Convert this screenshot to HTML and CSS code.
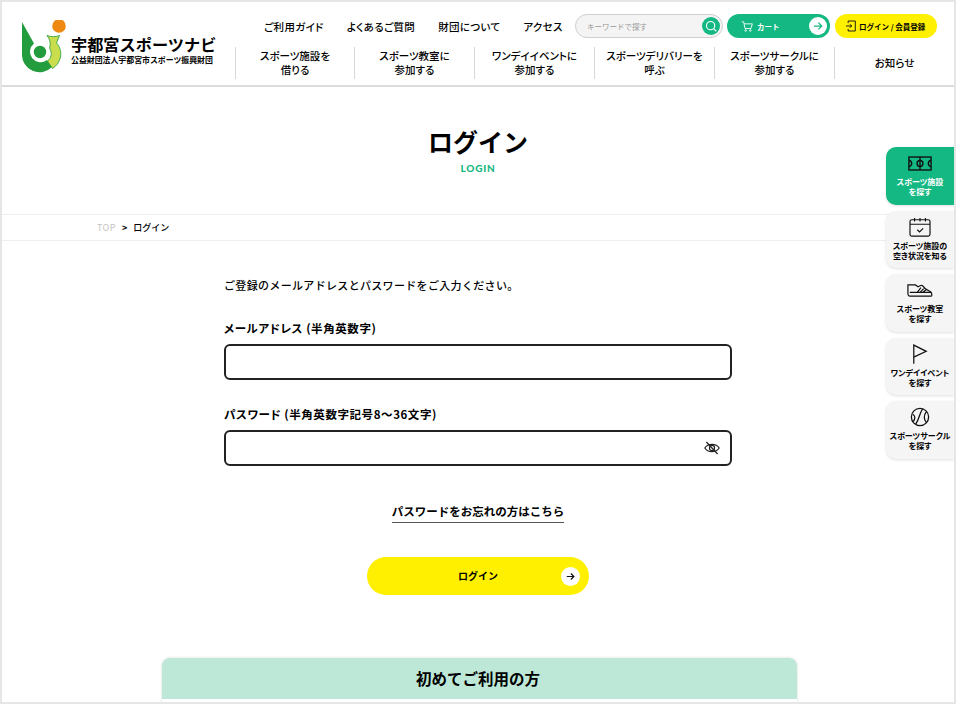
FILE: index.html
```html
<!DOCTYPE html>
<html lang="ja">
<head>
  <meta charset="UTF-8">
  <meta name="viewport" content="width=device-width, initial-scale=1.0">
  <title>ログイン - 宇都宮スポーツナビ</title>
  <link rel="stylesheet" href="styles.css">
</head>
<body>
<div class="frame">
  <header class="site-header">
    <a class="logo" href="#">
      <svg class="logo-mark" viewBox="22 20 44 54" width="44" height="54">
        <circle cx="59" cy="26" r="6.8" fill="#ee8a12"/>
        <circle cx="40" cy="52" r="6.2" fill="#229c3c"/>
        <path d="M22 22 L34 43.5 A10.5 10.5 0 0 0 47 60 L52 67 A17.5 17.5 0 0 1 22 54 Z" fill="#229c3c"/>
        <path d="M47 35.500 C51 37 56 37 59.500 35.500 L56.500 43 C60 47 61.500 52 60.500 57 C59.500 62 56.500 66 52.500 68.500 L47.500 61 C51.500 58 52.500 53 49.500 48 C51 44 50 39.500 47 35.500 Z" fill="#cadd4c" stroke="#229c3c" stroke-width=".8"/>
      </svg>
      <div class="logo-text">
        <span class="logo-name">宇都宮スポーツナビ</span>
        <span class="logo-org">公益財団法人宇都宮市スポーツ振興財団</span>
      </div>
    </a>
    <div class="header-right">
      <div class="top-row">
        <nav class="top-nav">
          <a href="#">ご利用ガイド</a>
          <a href="#">よくあるご質問</a>
          <a href="#">財団について</a>
          <a href="#">アクセス</a>
        </nav>
        <div class="search">
          <span class="search-text">キーワードで探す</span>
          <span class="search-btn">
            <svg viewBox="0 0 16 16" width="12" height="12" fill="none" stroke="#fff" stroke-width="1.500"><circle cx="7.500" cy="7.500" r="5.500"/><path d="M11.500 11.500 L15 15"/></svg>
          </span>
        </div>
        <a class="cart-btn" href="#">
          <svg viewBox="0 0 18 16" width="12" height="11" fill="none" stroke="#fff" stroke-width="1.300"><path d="M1 1 H4 L6 11 H15 L17 4 H4.500"/><circle cx="7" cy="14" r="1.200"/><circle cx="14" cy="14" r="1.200"/></svg>
          <span class="cart-label">カート</span>
          <span class="cart-arrow">
            <svg viewBox="0 0 12 12" width="10" height="10" fill="none" stroke="#14b883" stroke-width="1.500"><path d="M1 6 H10.500 M6.500 2 L10.500 6 L6.500 10"/></svg>
          </span>
        </a>
        <a class="login-btn" href="#">
          <svg viewBox="0 0 14 16" width="10" height="12" fill="none" stroke="#111" stroke-width="1.300"><path d="M3 4 V1 H13 V15 H3 V12"/><path d="M0 8 H8 M5.500 5.500 L8 8 L5.500 10.500"/></svg>
          <span>ログイン / 会員登録</span>
        </a>
      </div>
      <nav class="main-nav">
        <a href="#">スポーツ施設を<br>借りる</a>
        <a href="#">スポーツ教室に<br>参加する</a>
        <a href="#">ワンデイイベントに<br>参加する</a>
        <a href="#">スポーツデリバリーを<br>呼ぶ</a>
        <a href="#">スポーツサークルに<br>参加する</a>
        <a href="#">お知らせ</a>
      </nav>
    </div>
  </header>

  <div class="page-title">
    <h1>ログイン</h1>
    <p>LOGIN</p>
  </div>

  <div class="breadcrumb">
    <a href="#">TOP</a>
    <span class="sep">&gt;</span>
    <span class="current">ログイン</span>
  </div>

  <main class="login">
    <p class="lead">ご登録のメールアドレスとパスワードをご入力ください。</p>
    <form class="login-form">
      <label class="field-label" for="email">メールアドレス (半角英数字)</label>
      <input class="field-input" type="text" id="email">
      <label class="field-label" for="password">パスワード (半角英数字記号8〜36文字)</label>
      <div class="password-wrap">
        <input class="field-input" type="password" id="password">
        <svg class="eye" viewBox="0 0 20 20" width="16" height="16" fill="none" stroke="#222" stroke-width="1.500">
          <path d="M1 10 C5 4 15 4 19 10 C15 16 5 16 1 10 Z"/>
          <circle cx="10" cy="10" r="3.200"/>
          <path d="M3 2.500 L17 17.500"/>
        </svg>
      </div>
      <div class="forgot"><a href="#">パスワードをお忘れの方はこちら</a></div>
      <button class="submit-btn" type="button">
        <span>ログイン</span>
        <span class="submit-arrow">
          <svg viewBox="0 0 12 12" width="9" height="9" fill="none" stroke="#111" stroke-width="1.600"><path d="M1 6 H10.500 M6.500 2 L10.500 6 L6.500 10"/></svg>
        </span>
      </button>
    </form>
    <section class="first-time">
      <h2>初めてご利用の方</h2>
      <div class="first-time-body"></div>
    </section>
  </main>

  <!-- 右側の固定メニュー -->
  <aside class="side-nav">
    <a class="side-item active" href="#">
      <span class="side-icon">
        <svg viewBox="0 0 26 16" width="24" height="15" fill="none" stroke="#111" stroke-width="1.500">
          <rect x="1" y="1" width="24" height="14"/>
          <path d="M13 1 V15"/>
          <circle cx="13" cy="8" r="3.200"/>
          <path d="M1 4.500 C5 5.500 5 10.500 1 11.500 M25 4.500 C21 5.500 21 10.500 25 11.500"/>
        </svg>
      </span>
      <span class="side-label">スポーツ施設<br>を探す</span>
    </a>
    <a class="side-item" href="#">
      <span class="side-icon">
        <svg viewBox="0 0 24 22" width="22" height="20" fill="none" stroke="#111" stroke-width="1.300">
          <rect x="1" y="3" width="22" height="18" rx="2"/>
          <path d="M1 8 H23 M6 1 V5 M12 1 V5 M18 1 V5 M9 14 L11.500 16.500 L15.500 12.500"/>
        </svg>
      </span>
      <span class="side-label">スポーツ施設の<br>空き状況を知る</span>
    </a>
    <a class="side-item" href="#">
      <span class="side-icon">
        <svg viewBox="0 0 28 16" width="26" height="15" fill="none" stroke="#111" stroke-width="1.300">
          <path d="M1 2 H9 L12 4 C15 2 16 2 17 3 C19 7 24 8 26 10 C27 12 27 14 26 14 H3 C1 14 1 12 1 10 Z"/>
          <path d="M3 10 H26 M11 10 L15 5 M14 10 L18 6 M17 10 L21 7"/>
        </svg>
      </span>
      <span class="side-label">スポーツ教室<br>を探す</span>
    </a>
    <a class="side-item" href="#">
      <span class="side-icon">
        <svg viewBox="0 0 18 22" width="16" height="20" fill="none" stroke="#111" stroke-width="1.400">
          <path d="M2 22 V1 L16 8 L2 14.500"/>
        </svg>
      </span>
      <span class="side-label">ワンデイイベント<br>を探す</span>
    </a>
    <a class="side-item" href="#">
      <span class="side-icon">
        <svg viewBox="0 0 22 22" width="20" height="20" fill="none" stroke="#111" stroke-width="1.400">
          <circle cx="11" cy="11" r="9.500"/>
          <path d="M14 2 C10 7 11 12 6 19.500 M3 8 C6 10 6 13 3.500 16 M18 5 C15 9 15 14 18 17"/>
        </svg>
      </span>
      <span class="side-label">スポーツサークル<br>を探す</span>
    </a>
  </aside>
</div>
</body>
</html>
```

FILE: styles.css
```css
* {
  box-sizing: border-box;
}
body {
  margin: 0;
  font-family: "Noto Sans CJK JP", "Noto Sans", sans-serif;
  color: #000;
  background: #fff;
}
a {
  color: inherit;
  text-decoration: none;
}
.frame {
  position: relative;
  width: 956px;
  height: 704px;
  overflow: hidden;
  border: 2px solid #e6e6e6;
  background: #fff;
}

/* ヘッダー */
.site-header {
  display: flex;
  height: 85px;
  border-bottom: 2px solid #dcdcdc;
}
.logo {
  display: flex;
  align-items: flex-start;
  width: 233px;
  padding: 18px 0 0 20px;
  flex-shrink: 0;
}
.logo-mark {
  flex-shrink: 0;
}
.logo-text {
  display: flex;
  flex-direction: column;
  margin: 14px 0 0 5px;
}
.logo-name {
  font-size: 16.200px;
  font-weight: 700;
  line-height: 20px;
  white-space: nowrap;
}
.logo-org {
  font-size: 7.900px;
  font-weight: 700;
  line-height: 12px;
  white-space: nowrap;
}
.header-right {
  flex: 1;
  display: flex;
  flex-direction: column;
}
.top-row {
  display: flex;
  align-items: center;
  height: 24px;
  margin-top: 12px;
  padding-left: 29px;
}
.top-nav {
  display: flex;
  gap: 23px;
  font-size: 10.500px;
  font-weight: 500;
  font-feature-settings: "palt";
  letter-spacing: .03em;
  white-space: nowrap;
  width: 311px;
}
.search {
  display: flex;
  align-items: center;
  justify-content: space-between;
  width: 148px;
  height: 24px;
  padding: 0 2px 0 11px;
  border: 1px solid #cfcfcf;
  border-radius: 12px;
  background: #f4f4f4;
}
.search-text {
  font-size: 7.500px;
  color: #999;
}
.search-btn {
  display: flex;
  align-items: center;
  justify-content: center;
  width: 18px;
  height: 18px;
  border-radius: 50%;
  background: #14b883;
}
.cart-btn {
  display: flex;
  align-items: center;
  width: 103px;
  height: 24px;
  margin-left: 4px;
  padding: 0 3px 0 14px;
  border-radius: 12px;
  background: #14b883;
  color: #fff;
}
.cart-label {
  margin-left: 4px;
  font-size: 7.500px;
  font-weight: 700;
}
.cart-arrow {
  display: flex;
  align-items: center;
  justify-content: center;
  width: 18px;
  height: 18px;
  margin-left: auto;
  border-radius: 50%;
  background: #fff;
}
.login-btn {
  display: flex;
  align-items: center;
  gap: 3px;
  width: 102px;
  height: 24px;
  margin-left: 5px;
  padding-left: 11px;
  border-radius: 12px;
  background: #fff000;
  font-size: 7.500px;
  font-weight: 700;
  white-space: nowrap;
}
.main-nav {
  display: grid;
  grid-template-columns: 119px repeat(5, 120px);
  height: 32px;
  margin-top: 9px;
}
.main-nav a {
  display: flex;
  align-items: center;
  justify-content: center;
  border-left: 1px solid #d8d8d8;
  font-size: 10.500px;
  font-weight: 500;
  font-feature-settings: "palt";
  line-height: 14px;
  text-align: center;
  white-space: nowrap;
}

/* タイトル */
.page-title {
  height: 127px;
  padding-top: 37px;
  text-align: center;
}
.page-title h1 {
  margin: 0;
  font-size: 25px;
  font-weight: 700;
  line-height: 34px;
}
.page-title p {
  margin: 3px 0 0;
  font-family: "Lato", sans-serif;
  font-size: 10px;
  font-weight: 900;
  line-height: 14px;
  letter-spacing: .08em;
  color: #14b883;
}
.breadcrumb {
  display: flex;
  align-items: center;
  gap: 6px;
  height: 27px;
  padding-left: 95px;
  border-top: 1px solid #efefef;
  border-bottom: 1px solid #efefef;
  font-size: 9px;
}
.breadcrumb a {
  color: #c4c4c4;
  letter-spacing: .05em;
}
.breadcrumb .sep {
  font-weight: 700;
}
.breadcrumb .current {
  font-weight: 500;
}

/* ログイン */
.login {
  width: 508px;
  margin-left: 222px;
  padding-top: 36px;
}
.lead {
  margin: 0 0 26px;
  font-size: 11px;
  font-weight: 500;
  line-height: 17px;
  letter-spacing: .03em;
}
.field-label {
  display: block;
  margin-bottom: 7px;
  font-size: 11.500px;
  font-weight: 700;
  font-feature-settings: "palt";
  line-height: 17px;
  letter-spacing: .05em;
}
.field-input {
  display: block;
  width: 100%;
  height: 36px;
  margin-bottom: 26px;
  border: 2px solid #222;
  border-radius: 6px;
  background: #fff;
}
.password-wrap {
  position: relative;
}
.eye {
  position: absolute;
  top: 10px;
  right: 12px;
}
.forgot {
  margin-top: 31px;
  text-align: center;
}
.forgot a {
  display: inline-block;
  padding-bottom: 2px;
  border-bottom: 1px solid #555;
  font-size: 11.500px;
  font-weight: 700;
  line-height: 17px;
}
.submit-btn {
  display: flex;
  align-items: center;
  justify-content: center;
  position: relative;
  width: 222px;
  height: 38px;
  margin: 34px 0 0 143px;
  padding: 0 0 2px;
  border: none;
  border-radius: 19px;
  background: #fff000;
  color: #000;
  font-family: inherit;
  font-size: 10px;
  font-weight: 700;
}
.submit-arrow {
  position: absolute;
  top: 10px;
  right: 9px;
  display: flex;
  align-items: center;
  justify-content: center;
  width: 19px;
  height: 19px;
  border-radius: 50%;
  background: #fff;
}
.first-time {
  width: 635px;
  margin: 63px 0 0 -62px;
  border-radius: 8px 8px 0 0;
  background: #fff;
  box-shadow: 0 0 3px rgba(0, 0, 0, .15);
}
.first-time h2 {
  margin: 0;
  height: 41px;
  padding-right: 3px;
  border-radius: 8px 8px 0 0;
  background: #bde7d6;
  font-size: 15.500px;
  font-weight: 700;
  line-height: 41px;
  text-align: center;
}
.first-time-body {
  height: 20px;
}

/* 右側メニュー */
.side-nav {
  position: absolute;
  top: 145px;
  right: 0;
  width: 68px;
  display: flex;
  flex-direction: column;
  gap: 6px;
}
.side-item {
  display: flex;
  flex-direction: column;
  align-items: center;
  height: 57.500px;
  padding-top: 6px;
  border-radius: 10px 0 0 10px;
  background: #f5f5f5;
  box-shadow: 0 1px 3px rgba(0, 0, 0, .12);
  font-size: 8px;
  font-weight: 700;
  line-height: 10px;
  text-align: center;
  white-space: nowrap;
  font-feature-settings: "palt";
}
.side-icon {
  display: flex;
  align-items: center;
  justify-content: center;
  height: 20px;
}
.side-label {
  margin-top: 4px;
}
.side-item.active {
  background: #14b883;
  color: #fff;
}
```
